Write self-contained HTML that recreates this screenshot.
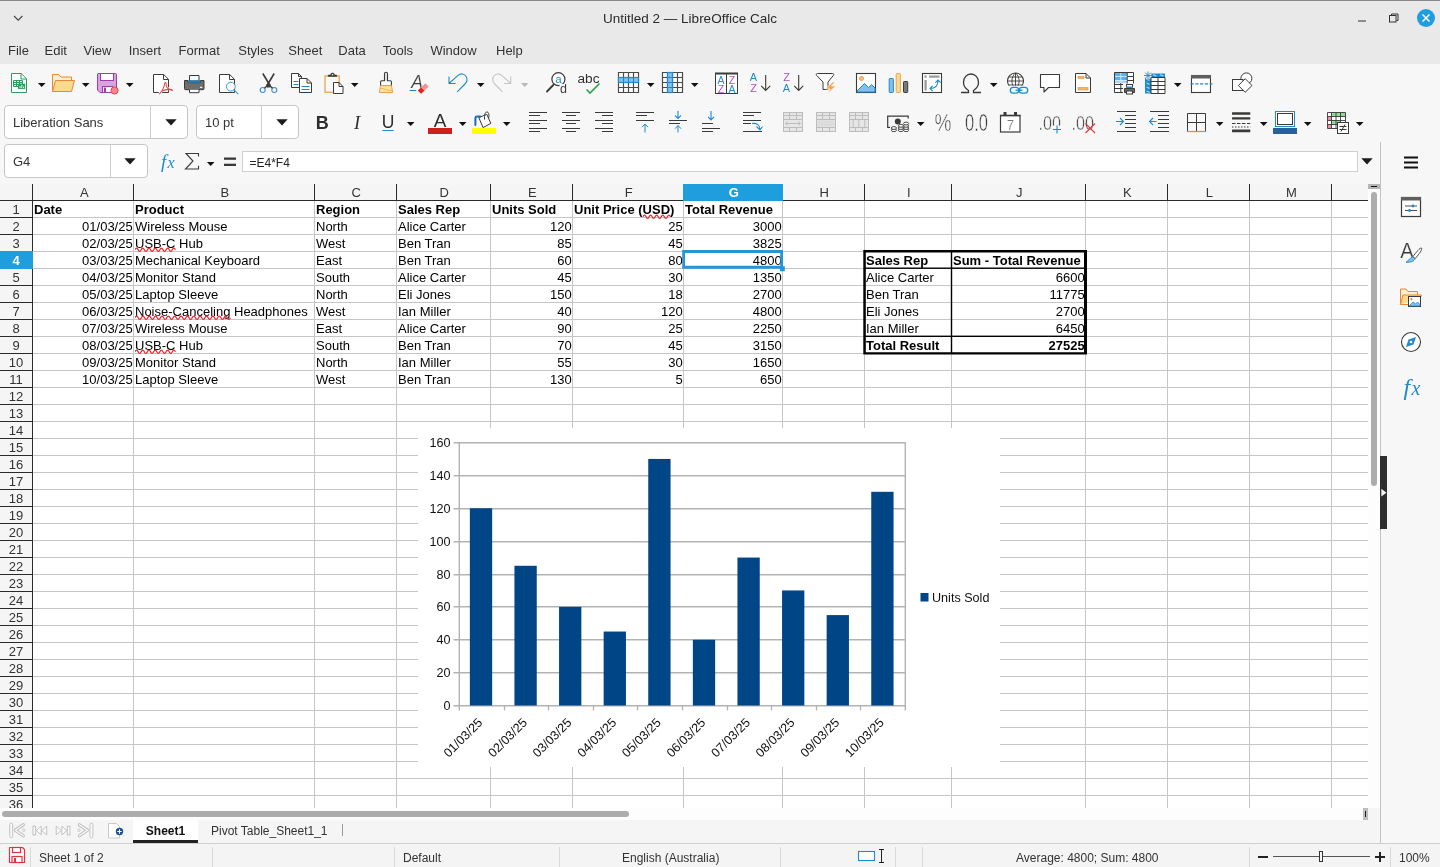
<!DOCTYPE html>
<html lang="en"><head><meta charset="utf-8"><title>Untitled 2 — LibreOffice Calc</title>
<style>
*{box-sizing:border-box;margin:0;padding:0}
html,body{width:1440px;height:867px;overflow:hidden;background:#f7f7f7}
body{position:relative;font-family:"Liberation Sans","DejaVu Sans",sans-serif;font-size:13px;color:#2e2e2e}
#app{position:absolute;left:0;top:0;width:1440px;height:867px;will-change:transform}
.a{position:absolute}
.t{position:absolute;white-space:nowrap;line-height:17px}
.ui{font-size:13px;color:#333}
.c{position:absolute;white-space:nowrap;font-size:13px;line-height:17px;height:17px;color:#000}
.r{text-align:right}
.b{font-weight:bold}
.rh{position:absolute;left:0;width:32px;height:17px;line-height:17px;text-align:center;font-size:13px;color:#333}
.ch{position:absolute;top:184px;height:16px;line-height:18px;text-align:center;font-size:13px;color:#333}
.ic{position:absolute;width:24px;height:24px;overflow:visible}
.box{position:absolute;background:#fff;border:1px solid #c6c6c6;border-radius:4px}
</style></head><body><div id="app">
<div class="a" style="left:0;top:0;width:1440px;height:64px;background:#e9e9e9"></div>
<div class="a" style="left:0;top:0;width:1440px;height:1px;background:#8a8a8a"></div>
<div class="t" style="left:520px;width:340px;text-align:center;top:9px;font-size:13.5px;color:#2b2b2b;line-height:20px">Untitled 2 — LibreOffice Calc</div>
<svg class="ic" style="left:6px;top:7px" width="24" height="24" viewBox="0 0 24 24"><path d="M8 9l4.200 4.200 4.200-4.200" fill="none" stroke="#444" stroke-width="1.100"/></svg>
<svg class="ic" style="left:1350px;top:7px" width="24" height="24" viewBox="0 0 24 24"><rect x="8" y="13.500" width="8" height="1" fill="#333"/></svg>
<svg class="ic" style="left:1382px;top:7px" width="24" height="24" viewBox="0 0 24 24"><path d="M9.500 8.500v-1.500h6.500v6.500h-1.500" fill="none" stroke="#333" stroke-width="1"/><rect x="7.500" y="8.500" width="6.500" height="6.500" fill="none" stroke="#333" stroke-width="1"/></svg>
<svg class="ic" style="left:1414px;top:6px" width="24" height="24" viewBox="0 0 24 24"><circle cx="12" cy="12" r="9" fill="#1e9ee0"/><path d="M8.500 8.500l7 7M15.500 8.500l-7 7" stroke="#fff" stroke-width="1.500"/></svg>
<div class="t ui" style="left:8px;top:42px;line-height:18px">File</div>
<div class="t ui" style="left:44.5px;top:42px;line-height:18px">Edit</div>
<div class="t ui" style="left:83.5px;top:42px;line-height:18px">View</div>
<div class="t ui" style="left:128.7px;top:42px;line-height:18px">Insert</div>
<div class="t ui" style="left:178.6px;top:42px;line-height:18px">Format</div>
<div class="t ui" style="left:238.3px;top:42px;line-height:18px">Styles</div>
<div class="t ui" style="left:288.3px;top:42px;line-height:18px">Sheet</div>
<div class="t ui" style="left:338.3px;top:42px;line-height:18px">Data</div>
<div class="t ui" style="left:382.7px;top:42px;line-height:18px">Tools</div>
<div class="t ui" style="left:430.4px;top:42px;line-height:18px">Window</div>
<div class="t ui" style="left:496px;top:42px;line-height:18px">Help</div>
<div class="a" style="left:0;top:64px;width:1440px;height:120px;background:#f7f7f7"></div>
<svg class="ic" style="left:7px;top:71px" width="24" height="24" viewBox="0 0 24 24"><path d="M4.500 2.500h9.700l5.300 5.300v13.700h-15z" fill="#fff" stroke="#2f9c5e" stroke-linejoin="round"/><path d="M14 2.500v5.500h5.500" fill="none" stroke="#2f9c5e"/><path d="M6.500 9.500h9v6h-9zM6.500 11.500h9M6.500 13.500h9M9.500 9.500v6M12.500 9.500v6" fill="#e9f6ee" stroke="#2f9c5e" stroke-width="1"/><rect x="11" y="12.700" width="7.200" height="5.200" fill="#2f9c5e"/><path d="M13 17v-2M14.800 17v-3M16.600 17v-1.500" stroke="#fff" stroke-width="0.900" fill="none"/></svg>
<svg class="ic" style="left:29px;top:71px" width="24" height="24" viewBox="0 0 24 24"><path d="M8.9 12h7.6l-3.8 4z" fill="#111"/></svg>
<svg class="ic" style="left:51px;top:71px" width="24" height="24" viewBox="0 0 24 24"><path d="M1.5 20.5v-17h6.2l2.3 2.5h10.5v4" fill="#fdf0d0" stroke="#ed8733" stroke-linejoin="round"/><path d="M1.5 20.5l3-11h19l-3 11z" fill="#f8db8f" stroke="#ed8733" stroke-linejoin="round"/></svg>
<svg class="ic" style="left:73px;top:71px" width="24" height="24" viewBox="0 0 24 24"><path d="M8.9 12h7.6l-3.8 4z" fill="#111"/></svg>
<svg class="ic" style="left:95px;top:71px" width="24" height="24" viewBox="0 0 24 24"><path d="M3 2.500h17.500a1 1 0 0 1 1 1v18h-16.500l-2.500-2.500v-15.500a1 1 0 0 1 0.500-1z" fill="#d9a3e2" stroke="#9b3fa0" stroke-linejoin="round"/><rect x="5.500" y="2.500" width="13" height="7" fill="#fff" stroke="#9b3fa0"/><rect x="7.500" y="15.500" width="10" height="6" fill="#fff" stroke="#9b3fa0"/><rect x="9" y="16.500" width="2" height="4.500" fill="#9b3fa0"/><circle cx="19.500" cy="19.500" r="3.600" fill="#f4858d" stroke="#e2484f"/></svg>
<svg class="ic" style="left:117px;top:71px" width="24" height="24" viewBox="0 0 24 24"><path d="M8.9 12h7.6l-3.8 4z" fill="#111"/></svg>
<svg class="ic" style="left:149px;top:71px" width="24" height="24" viewBox="0 0 24 24"><path d="M4.5 3.5h10.2l4.8 4.8v13.2h-15z" fill="#fff" stroke="#3a3a38" stroke-linejoin="round"/><path d="M14.5 3.5v5h5" fill="none" stroke="#3a3a38" stroke-linejoin="round"/><path d="M10.500 22.500c2.500-2.500 4.500-6 5-10 0.200-1.500 1.800-1.200 1.500 0.300-0.500 3 2 5.700 6.500 6.700" fill="none" stroke="#fff" stroke-width="2.600"/><path d="M10.500 22.800c2.700-2.600 4.600-6.200 5.100-10.300 0.200-1.500 1.700-1.300 1.500 0.200-0.400 3.200 2.200 5.900 6.400 6.800M12.500 20.200c3-1.500 6.500-2.100 10.500-1.700" fill="none" stroke="#e8474e" stroke-width="1.100" stroke-linecap="round"/></svg>
<svg class="ic" style="left:182px;top:71px" width="24" height="24" viewBox="0 0 24 24"><path d="M7.500 10v-5.500h9.500v5.500z" fill="#f2fafe" stroke="#3a3a38" stroke-linejoin="round"/><path d="M2.500 9.500h3.500v2.200h12.500v-2.200h3.500v8.200a1 1 0 0 1-1 1h-17.500a1 1 0 0 1-1-1z" fill="#6e6e6c" stroke="#3a3a38" stroke-linejoin="round"/><rect x="6.200" y="9.400" width="12.100" height="2.300" fill="#1e7bb5"/><path d="M7.500 18.700v3h9.500v-3" fill="#fff" stroke="#3a3a38" stroke-linejoin="round"/><rect x="18" y="15.800" width="2.300" height="1.100" fill="#fff"/></svg>
<svg class="ic" style="left:215px;top:71px" width="24" height="24" viewBox="0 0 24 24"><path d="M4.5 3.5h10.2l4.8 4.8v13.2h-15z" fill="#fff" stroke="#3a3a38" stroke-linejoin="round"/><path d="M14.5 3.5v5h5" fill="none" stroke="#3a3a38" stroke-linejoin="round"/><circle cx="15.800" cy="15.600" r="4.400" fill="#fff" stroke="#3b9ad6" stroke-width="1"/><path d="M19 18.800l4 4" stroke="#3b9ad6" stroke-width="1.100" stroke-linecap="round"/></svg>
<svg class="ic" style="left:256px;top:71px" width="24" height="24" viewBox="0 0 24 24"><path d="M6.800 2.500l7.200 12M18.200 2.500l-7.200 12" stroke="#3a3a38" stroke-width="1.600" fill="none"/><path d="M10 14.200l2.500-3 2.500 3-1 2.200h-3z" fill="#3a3a38"/><circle cx="6.700" cy="19" r="2.500" fill="none" stroke="#3f8fcb" stroke-width="1.100"/><circle cx="18.300" cy="19" r="2.500" fill="none" stroke="#3f8fcb" stroke-width="1.100"/><path d="M8.500 17.200l2.300-2.200M16.500 17.200l-2.300-2.200" stroke="#3a3a38" stroke-width="1.400"/></svg>
<svg class="ic" style="left:289px;top:71px" width="24" height="24" viewBox="0 0 24 24"><path d="M2.500 2.500h7l3 3v11h-10z" fill="#fff" stroke="#3a3a38" stroke-linejoin="round"/><path d="M9.500 2.500v3h3" fill="none" stroke="#3a3a38"/><path d="M4.500 10.500h5M4.500 13.500h5" stroke="#1e8bcd" stroke-width="1"/><path d="M10.500 7.500h7.500l4.500 4.500v9.500h-12z" fill="#fff" stroke="#3a3a38" stroke-linejoin="round"/><path d="M18 7.500v4.500h4.500" fill="none" stroke="#3a3a38"/><path d="M12.500 15.500h8M12.500 18.500h8" stroke="#1e8bcd" stroke-width="1"/></svg>
<svg class="ic" style="left:321px;top:71px" width="24" height="24" viewBox="0 0 24 24"><path d="M4 5h14.200v16.200h-14.200z" fill="#fafafa" stroke="#f3ad62" stroke-width="1.500"/><path d="M7.300 5.500v-1.500h2.200a2 2 0 0 1 4 0h2.200v1.500z" fill="#3a3a38" stroke="#3a3a38" stroke-width="0.600" stroke-linejoin="round"/><circle cx="11.500" cy="3.700" r="0.800" fill="#f7f7f7"/><path d="M12.500 11.500h5.500l4 4v7h-9.500z" fill="#fff" stroke="#3a3a38" stroke-linejoin="round"/><path d="M18 11.500v4h4" fill="none" stroke="#3a3a38"/></svg>
<svg class="ic" style="left:342px;top:71px" width="24" height="24" viewBox="0 0 24 24"><path d="M8.9 12h7.6l-3.8 4z" fill="#111"/></svg>
<svg class="ic" style="left:374px;top:71px" width="24" height="24" viewBox="0 0 24 24"><path d="M10.500 9.700v-7a1.500 1.500 0 0 1 3 0v7h2.900a1 1 0 0 1 1 1v3.800h-10.800v-3.800a1 1 0 0 1 1-1z" fill="#fff" stroke="#3a3a38" stroke-width="1.100" stroke-linejoin="round"/><rect x="11.300" y="2.300" width="1.400" height="7.500" fill="#d2d2d2"/><path d="M6.600 14.600h10.800l1.400 6.900h-13.600z" fill="#fbe3a8" stroke="#f0a050" stroke-linejoin="round"/><path d="M6 17.300c4 0.200 8 2 12.500 2.300" stroke="#f0a050" stroke-width="0.700" fill="none"/></svg>
<svg class="ic" style="left:406.5px;top:71px" width="24" height="24" viewBox="0 0 24 24"><text x="4.200" y="16.700" font-family="Liberation Sans, sans-serif" font-size="17.500" font-style="italic" fill="#3a3a38" stroke="#f7f7f7" stroke-width="0.200">A</text><path d="M2.600 19.500h6.600" stroke="#2e7fb8" stroke-width="1.100"/><path d="M10.900 19.600l7.500-7.300 3.200 3.200-7.500 7.300z" fill="#f98d8d"/><path d="M10.900 19.600l3.200-3.100 3.200 3.200-3.200 3.100z" fill="#e0241b"/></svg>
<svg class="ic" style="left:445px;top:71px" width="24" height="24" viewBox="0 0 24 24"><path d="M4 5.500v7h6.600M4 12.500l9-8.200c2.500-2.200 6.500-1.800 8.200 1.200 1.700 3 0.300 6-1.700 8l-7.300 7.300" fill="none" stroke="#1e8bcd" stroke-width="1.100"/></svg>
<svg class="ic" style="left:468px;top:71px" width="24" height="24" viewBox="0 0 24 24"><path d="M8.9 12h7.6l-3.8 4z" fill="#111"/></svg>
<svg class="ic" style="left:490px;top:71px" width="24" height="24" viewBox="0 0 24 24"><path d="M20.700 5.500v7h-6.600M20.700 12.500l-9-8.200c-2.500-2.200-6.500-1.800-8.200 1.200-1.700 3-0.300 6 1.700 8l7.300 7.300" fill="none" stroke="#c4c4c4" stroke-width="1.100"/></svg>
<svg class="ic" style="left:512px;top:71px" width="24" height="24" viewBox="0 0 24 24"><path d="M8.9 12h7.6l-3.8 4z" fill="#b9b9b9"/></svg>
<svg class="ic" style="left:544px;top:71px" width="24" height="24" viewBox="0 0 24 24"><circle cx="14.400" cy="8.200" r="6.500" fill="#fff" stroke="#3a3a38" stroke-width="1.200"/><path d="M9.300 14l-6.300 6.500" stroke="#3a3a38" stroke-width="1.800" stroke-linecap="round"/><text x="11.200" y="12" font-family="Liberation Sans, sans-serif" font-size="11.500" fill="#1e8bcd">a</text><rect x="15.500" y="13" width="8.500" height="10" fill="#f7f7f7"/><text x="16" y="21.800" font-family="Liberation Sans, sans-serif" font-size="12.500" fill="#3a3a38">d</text></svg>
<svg class="ic" style="left:577px;top:71px" width="24" height="24" viewBox="0 0 24 24"><text x="0.500" y="11.800" font-family="Liberation Sans, sans-serif" font-size="12.500" fill="#2f2f2d" textLength="22" lengthAdjust="spacingAndGlyphs">abc</text><path d="M9.500 18.500l3.500 3.500 9.500-9.500" fill="none" stroke="#2aa24a" stroke-width="1.600"/></svg>
<svg class="ic" style="left:616px;top:71px" width="24" height="24" viewBox="0 0 24 24"><rect x="2.500" y="1.500" width="20" height="20" rx="0.800" fill="#fff"/><path d="M2.500 1.500h20v20h-20zM2.500 6.500h20M2.500 11.500h20M2.500 16.500h20M7.500 1.500v20M12.500 1.500v20M17.500 1.500v20" fill="none" stroke="#4a4a48" stroke-width="1.200"/><rect x="2.500" y="6.500" width="20" height="5" fill="#83beec" stroke="#1e8bcd" stroke-width="1.200"/><path d="M7.500 6.500v5M12.500 6.500v5M17.500 6.500v5" stroke="#1e8bcd" stroke-width="1.200"/></svg>
<svg class="ic" style="left:638px;top:71px" width="24" height="24" viewBox="0 0 24 24"><path d="M8.9 12h7.6l-3.8 4z" fill="#111"/></svg>
<svg class="ic" style="left:660px;top:71px" width="24" height="24" viewBox="0 0 24 24"><rect x="2.500" y="1.500" width="20" height="20" rx="0.800" fill="#fff"/><path d="M2.500 1.500h20v20h-20zM2.500 6.500h20M2.500 11.500h20M2.500 16.500h20M7.500 1.500v20M12.500 1.500v20M17.500 1.500v20" fill="none" stroke="#4a4a48" stroke-width="1.200"/><rect x="7.500" y="1.500" width="5" height="20" fill="#83beec" stroke="#1e8bcd" stroke-width="1.200"/><path d="M7.500 6.500h5M7.500 11.500h5M7.500 16.500h5" stroke="#1e8bcd" stroke-width="1.200"/></svg>
<svg class="ic" style="left:682px;top:71px" width="24" height="24" viewBox="0 0 24 24"><path d="M8.9 12h7.6l-3.8 4z" fill="#111"/></svg>
<svg class="ic" style="left:713.5px;top:71px" width="24" height="24" viewBox="0 0 24 24"><rect x="1.500" y="2.500" width="22" height="20" fill="#fff" stroke="#3a3a38"/><rect x="1" y="1.500" width="23" height="2" fill="#3a3a38"/><path d="M12.500 3v19.500" stroke="#3a3a38"/><text x="7" y="12.8" font-family="Liberation Sans, sans-serif" font-size="10.5" fill="#1e8bcd" text-anchor="middle">A</text><text x="7" y="21.5" font-family="Liberation Sans, sans-serif" font-size="10.5" fill="#b84fc0" text-anchor="middle">Z</text><text x="18" y="12.8" font-family="Liberation Sans, sans-serif" font-size="10.5" fill="#b84fc0" text-anchor="middle">Z</text><text x="18" y="21.5" font-family="Liberation Sans, sans-serif" font-size="10.5" fill="#1e8bcd" text-anchor="middle">A</text></svg>
<svg class="ic" style="left:746.8px;top:71px" width="24" height="24" viewBox="0 0 24 24"><text x="6.5" y="10.3" font-family="Liberation Sans, sans-serif" font-size="11" fill="#1e8bcd" text-anchor="middle">A</text><text x="6.5" y="21.3" font-family="Liberation Sans, sans-serif" font-size="11" fill="#b84fc0" text-anchor="middle">Z</text><path d="M18.700 4v15.300M14.200 14.800l4.500 4.700 4.500-4.700" fill="none" stroke="#3a3a38" stroke-width="1.100"/></svg>
<svg class="ic" style="left:779.5px;top:71px" width="24" height="24" viewBox="0 0 24 24"><text x="6.5" y="10.3" font-family="Liberation Sans, sans-serif" font-size="11" fill="#b84fc0" text-anchor="middle">Z</text><text x="6.5" y="21.3" font-family="Liberation Sans, sans-serif" font-size="11" fill="#1e8bcd" text-anchor="middle">A</text><path d="M18.700 4v15.300M14.200 14.800l4.500 4.700 4.500-4.700" fill="none" stroke="#3a3a38" stroke-width="1.100"/></svg>
<svg class="ic" style="left:813px;top:71px" width="24" height="24" viewBox="0 0 24 24"><path d="M4.500 2.500h15c1.300 0 1.600 1 0.800 2l-5.300 6.500v7.500h-5v-7.500l-6.300-6.500c-0.800-1-0.500-2 0.800-2z" fill="#fff" stroke="#3a3a38" stroke-linejoin="round"/><path d="M19.500 11l-7 7h4.500l-3.500 5.500 9.500-8.500h-4.500l3.500-4z" fill="#f5a34b" stroke="#f7f7f7" stroke-width="0.800"/></svg>
<svg class="ic" style="left:854px;top:71px" width="24" height="24" viewBox="0 0 24 24"><rect x="2.500" y="2.500" width="19" height="19" fill="#fff" stroke="#3a3a38" stroke-width="1.100"/><circle cx="7.500" cy="7.500" r="2" fill="#f8c272" stroke="#ed8733" stroke-width="0.800"/><path d="M3 21v-1l7.500-7.500 4 4 3-3 3.500 3.500v4z" fill="#83beec" stroke="#1e8bcd" stroke-width="1" stroke-linejoin="round"/></svg>
<svg class="ic" style="left:886px;top:71px" width="24" height="24" viewBox="0 0 24 24"><rect x="3.200" y="7.500" width="4.200" height="14" rx="0.800" fill="#83beec" stroke="#1e8bcd"/><rect x="10.200" y="2.500" width="4.200" height="19" rx="0.800" fill="#f8db8f" stroke="#f0a550"/><rect x="17.500" y="10.500" width="4.200" height="11" rx="0.800" fill="#7a7a78" stroke="#3a3a38"/></svg>
<svg class="ic" style="left:920px;top:71px" width="24" height="24" viewBox="0 0 24 24"><rect x="2.500" y="2.500" width="19" height="19" fill="#fff" stroke="#3a3a38" stroke-width="1.100"/><rect x="4.500" y="4.500" width="2.200" height="2.200" fill="#9a9a9a"/><rect x="9" y="4.500" width="10.500" height="2.200" fill="#9a9a9a"/><rect x="4.500" y="9" width="2.200" height="10.500" fill="#9a9a9a"/><path d="M10 17.500c5 0 8-3 8-8M15.300 11.700l2.700-2.700 2.700 2.700M12.700 14.800l-2.700 2.700 2.700 2.700" fill="none" stroke="#1e8bcd" stroke-width="1.100"/></svg>
<svg class="ic" style="left:959px;top:71px" width="24" height="24" viewBox="0 0 24 24"><path d="M2 21.500h7.500v-2c-3-1.800-5-4.800-5-8.200 0-4.800 3.300-8.300 7.500-8.300s7.500 3.500 7.500 8.300c0 3.400-2 6.400-5 8.200v2h7.500" fill="none" stroke="#3a3a38" stroke-width="1.300"/></svg>
<svg class="ic" style="left:981px;top:71px" width="24" height="24" viewBox="0 0 24 24"><path d="M8.9 12h7.6l-3.8 4z" fill="#111"/></svg>
<svg class="ic" style="left:1005px;top:71px" width="24" height="24" viewBox="0 0 24 24"><circle cx="10.500" cy="10" r="8" fill="#fff" stroke="#3a3a38" stroke-width="1.100"/><path d="M2.500 10h16M10.500 2v16M3.700 6h13.600M3.700 14h13.600M10.500 2c-4.800 3.700-4.800 12.300 0 16M10.500 2c4.800 3.700 4.800 12.300 0 16" fill="none" stroke="#3a3a38" stroke-width="0.900"/><rect x="3.500" y="14.800" width="20.500" height="9" fill="#f7f7f7"/><rect x="5.300" y="16.300" width="8.500" height="5.800" rx="2.900" fill="none" stroke="#1e8bcd" stroke-width="1.300"/><rect x="14.200" y="16.300" width="8.500" height="5.800" rx="2.900" fill="none" stroke="#1e8bcd" stroke-width="1.300"/><path d="M10.500 19.200h7" stroke="#1e8bcd" stroke-width="1.300"/></svg>
<svg class="ic" style="left:1038px;top:71px" width="24" height="24" viewBox="0 0 24 24"><path d="M2.500 3.500h19v13h-11l-4.500 4.500v-4.500h-3.500z" fill="#fff" stroke="#3a3a38" stroke-width="1.100" stroke-linejoin="round"/></svg>
<svg class="ic" style="left:1071px;top:71px" width="24" height="24" viewBox="0 0 24 24"><path d="M4.500 2.500h10.500l4.500 4.500v14.500h-15z" fill="#fff" stroke="#3a3a38" stroke-linejoin="round"/><path d="M15 2.500v4.500h4.500" fill="none" stroke="#3a3a38"/><rect x="7" y="5.500" width="6" height="2" fill="#f6b868" stroke="#ed8733" stroke-width="0.600"/><rect x="7" y="16.500" width="10" height="2.500" fill="#f6b868" stroke="#ed8733" stroke-width="0.600"/></svg>
<svg class="ic" style="left:1111px;top:71px" width="24" height="24" viewBox="0 0 24 24"><rect x="3.500" y="1.500" width="19" height="20" fill="#fff"/><rect x="3.500" y="1.500" width="12.700" height="8" fill="#5fb0ea"/><rect x="3.500" y="9.500" width="12.700" height="2.500" fill="#a9d4f5"/><path d="M3.500 1.500h19v20h-19zM3.500 13.500h19M3.500 17.500h19M16.200 1.500v20M9.800 12v9.500M16.200 5.500h6.300M16.200 9.500h6.300" fill="none" stroke="#3a3a38" stroke-width="1"/><path d="M4 5.500h12M4 9.500h12M9.800 2v10" stroke="#d5eafa" stroke-width="0.900"/><rect x="12" y="12.500" width="12" height="11.500" fill="#f7f7f7"/><rect x="15.500" y="13.500" width="6" height="3.500" fill="#fff" stroke="#3a3a38"/><rect x="15" y="15.500" width="7" height="1.500" fill="#1e8bcd"/><path d="M13.500 17.500h10v4h-10z" fill="#6b6b69" stroke="#3a3a38"/><rect x="15.500" y="20" width="6" height="3" fill="#fff" stroke="#3a3a38"/></svg>
<svg class="ic" style="left:1143px;top:71px" width="24" height="24" viewBox="0 0 24 24"><rect x="2" y="2.500" width="20" height="20" fill="#fff"/><rect x="2" y="2.500" width="20" height="4" fill="#1e8bcd"/><rect x="2" y="2.500" width="6" height="20" fill="#1e8bcd"/><path d="M8 6.500h14v16h-14zM8 10.500h14M8 14.500h14M8 18.500h14M15 6.500v16" fill="none" stroke="#3a3a38" stroke-width="1"/><path d="M3.500 8l3 1.300M3.500 12l3 1.300M3.500 16l3 1.300M3.500 20l3 1.300M10 3.700l3.500 1.500M17 3.700l3.500 1.500" stroke="#9fd0f3" stroke-width="1.300"/><circle cx="5" cy="4.500" r="3.600" fill="#f7f7f7"/><path d="M5 0.500v8M1 4.500h8M2.200 1.700l5.600 5.600M7.800 1.700l-5.600 5.600" stroke="#1e8bcd" stroke-width="0.900"/></svg>
<svg class="ic" style="left:1165px;top:71px" width="24" height="24" viewBox="0 0 24 24"><path d="M8.9 12h7.6l-3.8 4z" fill="#111"/></svg>
<svg class="ic" style="left:1189px;top:71px" width="24" height="24" viewBox="0 0 24 24"><rect x="2.500" y="4.500" width="19" height="17" fill="#fff" stroke="#3a3a38" stroke-width="1.100"/><rect x="2" y="4" width="20" height="3.500" fill="#5e5e5c"/><path d="M1.500 12.800h22" stroke="#1e8bcd" stroke-width="1.200" stroke-dasharray="3.200 1.600"/></svg>
<svg class="ic" style="left:1230px;top:71px" width="24" height="24" viewBox="0 0 24 24"><circle cx="16.400" cy="7.400" r="5.500" fill="#fff" stroke="#3a3a38"/><rect x="2.500" y="8.500" width="10.500" height="11" fill="#fff" stroke="#3a3a38"/><path d="M15.200 7.700l6.800 6.800-6.800 6.800-6.800-6.800z" fill="#fff" stroke="#3a3a38" stroke-linejoin="round"/></svg>
<div class="box" style="left:4px;top:105px;width:184px;height:34px"></div>
<div class="a" style="left:150px;top:106px;width:1px;height:32px;background:#d0d0d0"></div>
<div class="t ui" style="left:13px;top:114px;line-height:18px">Liberation Sans</div>
<svg class="ic" style="left:159px;top:110px" width="24" height="24" viewBox="0 0 24 24"><path d="M6.3 9.2h11.4l-5.7 6.2z" fill="#1c1c1c"/></svg>
<div class="box" style="left:196px;top:105px;width:103px;height:34px"></div>
<div class="a" style="left:261px;top:106px;width:1px;height:32px;background:#d0d0d0"></div>
<div class="t ui" style="left:205px;top:114px;line-height:18px">10 pt</div>
<svg class="ic" style="left:270px;top:110px" width="24" height="24" viewBox="0 0 24 24"><path d="M6.3 9.2h11.4l-5.7 6.2z" fill="#1c1c1c"/></svg>
<svg class="ic" style="left:310px;top:110px" width="24" height="24" viewBox="0 0 24 24"><text x="12.300" y="19" font-family="Liberation Sans, sans-serif" font-size="18" font-weight="bold" fill="#2e2e2c" text-anchor="middle">B</text></svg>
<svg class="ic" style="left:344px;top:110px" width="24" height="24" viewBox="0 0 24 24"><text x="13" y="19" font-family="Liberation Serif, serif" font-size="18.500" font-style="italic" fill="#2e2e2c" text-anchor="middle">I</text></svg>
<svg class="ic" style="left:376px;top:110px" width="24" height="24" viewBox="0 0 24 24"><text x="12" y="17.800" font-family="Liberation Sans, sans-serif" font-size="17.500" fill="#2e2e2c" text-anchor="middle">U</text><path d="M6.300 20.500h11.400" stroke="#1e8bcd" stroke-width="1"/></svg>
<svg class="ic" style="left:398px;top:110px" width="24" height="24" viewBox="0 0 24 24"><path d="M8.9 12h7.6l-3.8 4z" fill="#111"/></svg>
<svg class="ic" style="left:427px;top:110px" width="24" height="24" viewBox="0 0 24 24"><text x="13" y="16.500" font-family="Liberation Sans, sans-serif" font-size="19" fill="#2e2e2c" text-anchor="middle">A</text><rect x="1" y="18" width="24" height="6" fill="#c9211e"/></svg>
<svg class="ic" style="left:450px;top:110px" width="24" height="24" viewBox="0 0 24 24"><path d="M8.9 12h7.6l-3.8 4z" fill="#111"/></svg>
<svg class="ic" style="left:472px;top:110px" width="24" height="24" viewBox="0 0 24 24"><path d="M6.800 7.600l8-3.200 4 8.900-7.700 4.300z" fill="#fff" stroke="#3a3a38" stroke-width="1" stroke-linejoin="round"/><path d="M12.600 9.600c-0.400-4.500 0.400-7.400 2.200-7.600 2-0.200 2.600 3 1.800 6" fill="none" stroke="#3a3a38" stroke-width="1"/><path d="M3.400 15v-6.500c0-1.300 0.500-1.900 1.800-1.900h3" fill="none" stroke="#1c6db5" stroke-width="2" stroke-linecap="round"/><rect x="0" y="18" width="24" height="6" fill="#ffff00"/></svg>
<svg class="ic" style="left:494px;top:110px" width="24" height="24" viewBox="0 0 24 24"><path d="M8.9 12h7.6l-3.8 4z" fill="#111"/></svg>
<svg class="ic" style="left:525px;top:110px" width="24" height="24" viewBox="0 0 24 24"><path d="M4 2.5H22M4 5.5H15M4 10.5H22M4 13.5H15M4 18.5H22M4 21.5H15" stroke="#3a3a38" stroke-width="1" fill="none"/></svg>
<svg class="ic" style="left:558px;top:110px" width="24" height="24" viewBox="0 0 24 24"><path d="M4 2.5H22M8 5.5H18M4 10.5H22M8 13.5H18M4 18.5H22M8 21.5H18" stroke="#3a3a38" stroke-width="1" fill="none"/></svg>
<svg class="ic" style="left:592px;top:110px" width="24" height="24" viewBox="0 0 24 24"><path d="M3 2.5H21M10 5.5H21M3 10.5H21M10 13.5H21M3 18.5H21M10 21.5H21" stroke="#3a3a38" stroke-width="1" fill="none"/></svg>
<svg class="ic" style="left:633px;top:110px" width="24" height="24" viewBox="0 0 24 24"><path d="M3 2.5H21M3 5.5H14M3 10.5H21" stroke="#3a3a38" stroke-width="1" fill="none"/><path d="M12 22.5V14M9 17.2l3-3.200 3 3.200" fill="none" stroke="#1e8bcd" stroke-width="1"/></svg>
<svg class="ic" style="left:666px;top:110px" width="24" height="24" viewBox="0 0 24 24"><path d="M3 10.5H21M3 13.5H14" stroke="#3a3a38" stroke-width="1" fill="none"/><path d="M12 1V8.5M9 5.3l3 3.200 3-3.200" fill="none" stroke="#1e8bcd" stroke-width="1.100"/><path d="M12 22.5V15.5M9 18.7l3-3.200 3 3.200" fill="none" stroke="#1e8bcd" stroke-width="1"/></svg>
<svg class="ic" style="left:699px;top:110px" width="24" height="24" viewBox="0 0 24 24"><path d="M3 13.5H14M3 18.5H21M3 21.5H14" stroke="#3a3a38" stroke-width="1" fill="none"/><path d="M12 1V10M9 6.8l3 3.200 3-3.200" fill="none" stroke="#1e8bcd" stroke-width="1.100"/></svg>
<svg class="ic" style="left:740px;top:110px" width="24" height="24" viewBox="0 0 24 24"><path d="M3 2.5H21M3 5.5H14M3 10.5H21M3 13.5H11M3 21.5H22" stroke="#3a3a38" stroke-width="1" fill="none"/><path d="M12 13.500c5-0.500 8 1.500 8 6M16.500 16.500l3.500 3.500 2.500-3.500" fill="none" stroke="#1e8bcd" stroke-width="1.100"/></svg>
<svg class="ic" style="left:781px;top:110px" width="24" height="24" viewBox="0 0 24 24"><rect x="2.500" y="2.500" width="19" height="19" fill="#e6e6e6" stroke="#bdbdbd"/><path d="M2.500 5.500h19M2.500 9.500h19M2.500 17.500h19M8.500 2.500v7M15.500 2.500v7M8.500 17.500v4M15.500 17.500v4" stroke="#bdbdbd" fill="none"/><path d="M4.500 13.500h15M6.500 11.700l-2 1.800 2 1.800M17.500 11.700l2 1.800-2 1.800" fill="none" stroke="#bdbdbd" stroke-width="1"/></svg>
<svg class="ic" style="left:814px;top:110px" width="24" height="24" viewBox="0 0 24 24"><rect x="2.500" y="2.500" width="19" height="19" fill="#e6e6e6" stroke="#bdbdbd"/><path d="M2.500 5.500h19M2.500 9.500h19M2.500 17.500h19M8.500 2.500v7M15.500 2.500v7M8.500 17.500v4M15.500 17.500v4" stroke="#bdbdbd" fill="none"/><rect x="3.500" y="10.500" width="17" height="6" fill="#dcdcdc"/></svg>
<svg class="ic" style="left:847px;top:110px" width="24" height="24" viewBox="0 0 24 24"><rect x="2.500" y="2.500" width="19" height="19" fill="#e6e6e6" stroke="#bdbdbd"/><path d="M2.500 5.500h19M2.500 9.500h19M2.500 17.500h19M8.500 2.500v7M15.500 2.500v7M8.500 17.500v4M15.500 17.500v4" stroke="#bdbdbd" fill="none"/><path d="M6.200 9.500v8M11.800 9.500v8M17.800 9.500v8" stroke="#bdbdbd" fill="none"/></svg>
<svg class="ic" style="left:885px;top:110px" width="24" height="24" viewBox="0 0 24 24"><path d="M5 17.300h-2.300v-11.200h20.500v2.300" fill="none" stroke="#3a3a38" stroke-width="1.200"/><circle cx="12.800" cy="11.500" r="3" fill="#3a3a38"/><ellipse cx="8.9" cy="20.2" rx="2.600" ry="1.400" fill="#fff" stroke="#3a3a38" stroke-width="0.900"/><ellipse cx="8.9" cy="18.0" rx="2.600" ry="1.400" fill="#fff" stroke="#3a3a38" stroke-width="0.900"/><ellipse cx="15.9" cy="20.2" rx="2.600" ry="1.400" fill="#fff" stroke="#3a3a38" stroke-width="0.900"/><ellipse cx="15.9" cy="18.0" rx="2.600" ry="1.400" fill="#fff" stroke="#3a3a38" stroke-width="0.900"/><ellipse cx="15.9" cy="15.8" rx="2.600" ry="1.400" fill="#fff" stroke="#3a3a38" stroke-width="0.900"/><ellipse cx="21.1" cy="20.2" rx="2.600" ry="1.400" fill="#fff" stroke="#3a3a38" stroke-width="0.900"/><ellipse cx="21.1" cy="18.0" rx="2.600" ry="1.400" fill="#fff" stroke="#3a3a38" stroke-width="0.900"/><ellipse cx="21.1" cy="15.8" rx="2.600" ry="1.400" fill="#fff" stroke="#3a3a38" stroke-width="0.900"/><ellipse cx="21.1" cy="13.6" rx="2.600" ry="1.400" fill="#fff" stroke="#3a3a38" stroke-width="0.900"/></svg>
<svg class="ic" style="left:908px;top:110px" width="24" height="24" viewBox="0 0 24 24"><path d="M8.9 12h7.6l-3.8 4z" fill="#111"/></svg>
<svg class="ic" style="left:931px;top:110px" width="24" height="24" viewBox="0 0 24 24"><text x="12" y="21" font-family="Liberation Sans, sans-serif" font-size="24" fill="#3a3a38" stroke="#f7f7f7" stroke-width="0.550" text-anchor="middle" textLength="17" lengthAdjust="spacingAndGlyphs">%</text></svg>
<svg class="ic" style="left:964px;top:110px" width="24" height="24" viewBox="0 0 24 24"><text x="12.500" y="21" font-family="Liberation Sans, sans-serif" font-size="23" fill="#3a3a38" stroke="#f7f7f7" stroke-width="0.550" text-anchor="middle" textLength="23" lengthAdjust="spacingAndGlyphs">0.0</text></svg>
<svg class="ic" style="left:998px;top:110px" width="24" height="24" viewBox="0 0 24 24"><rect x="2.500" y="5.500" width="19.500" height="16.500" fill="#fff" stroke="#3a3a38" stroke-width="1.200"/><rect x="2" y="4.800" width="20.500" height="1.500" fill="#3a3a38"/><rect x="5.500" y="2" width="3" height="3.500" fill="#3a3a38"/><rect x="16" y="2" width="3" height="3.500" fill="#3a3a38"/><text x="12.300" y="19.500" font-family="Liberation Sans, sans-serif" font-size="14" fill="#3a3a38" stroke="#fff" stroke-width="0.450" text-anchor="middle">7</text></svg>
<svg class="ic" style="left:1038px;top:110px" width="24" height="24" viewBox="0 0 24 24"><text x="0.500" y="20.300" font-family="Liberation Sans, sans-serif" font-size="20" fill="#3a3a38" stroke="#f7f7f7" stroke-width="0.550" textLength="22.500" lengthAdjust="spacingAndGlyphs">.00</text><rect x="14" y="15.500" width="10" height="9" fill="#f7f7f7"/><path d="M19 15.500v8M15 19.500h8" stroke="#1e8bcd" stroke-width="1.100"/></svg>
<svg class="ic" style="left:1071px;top:110px" width="24" height="24" viewBox="0 0 24 24"><text x="0.500" y="20.300" font-family="Liberation Sans, sans-serif" font-size="20" fill="#3a3a38" stroke="#f7f7f7" stroke-width="0.550" textLength="22.500" lengthAdjust="spacingAndGlyphs">.00</text><path d="M14.500 13.500l9.500 9.500M24 13.500l-9.500 9.500" stroke="#e9383f" stroke-width="1.100"/></svg>
<svg class="ic" style="left:1114px;top:110px" width="24" height="24" viewBox="0 0 24 24"><path d="M3 1.5H22M11 5.5H22M11 9.5H22M11 13.5H22M11 17.5H22M3 21.5H22" stroke="#3a3a38" stroke-width="1" fill="none"/><path d="M2 11.500h7M6 8l3.500 3.500-3.500 3.500" fill="none" stroke="#1e8bcd" stroke-width="1.100"/></svg>
<svg class="ic" style="left:1147px;top:110px" width="24" height="24" viewBox="0 0 24 24"><path d="M3 1.5H22M11 5.5H22M11 9.5H22M11 13.5H22M11 17.5H22M3 21.5H22" stroke="#3a3a38" stroke-width="1" fill="none"/><path d="M9.500 11.500h-7M6 8l-3.500 3.500 3.500 3.500" fill="none" stroke="#1e8bcd" stroke-width="1.100"/></svg>
<svg class="ic" style="left:1184px;top:110px" width="24" height="24" viewBox="0 0 24 24"><path d="M3.500 21.500v-18h18v18M12.500 3.500v18M3.500 12.500h18" fill="none" stroke="#3a3a38" stroke-width="1"/><path d="M3 21.500h19" stroke="#ed8733" stroke-width="1.200"/></svg>
<svg class="ic" style="left:1207px;top:110px" width="24" height="24" viewBox="0 0 24 24"><path d="M8.9 12h7.6l-3.8 4z" fill="#111"/></svg>
<svg class="ic" style="left:1229px;top:110px" width="24" height="24" viewBox="0 0 24 24"><rect x="3" y="2.200" width="18.300" height="2.600" rx="0.500" fill="#3a3a38"/><rect x="3" y="7.300" width="18.300" height="2.200" rx="0.500" fill="#3a3a38"/><path d="M3 13.500h18.300" stroke="#3a3a38" stroke-width="1" stroke-dasharray="3.500 1.500"/><path d="M3 17h18.300" stroke="#3a3a38" stroke-width="1" stroke-dasharray="1.500 1.500"/><rect x="3" y="19.400" width="18.300" height="2.800" rx="0.500" fill="#3a3a38"/></svg>
<svg class="ic" style="left:1251px;top:110px" width="24" height="24" viewBox="0 0 24 24"><path d="M8.9 12h7.6l-3.8 4z" fill="#111"/></svg>
<svg class="ic" style="left:1273px;top:110px" width="24" height="24" viewBox="0 0 24 24"><rect x="2.500" y="1.500" width="19" height="15" fill="#fff" stroke="#1e8bcd" stroke-width="1"/><rect x="4.500" y="3.500" width="15" height="11" fill="none" stroke="#3a3a38" stroke-width="1"/><rect x="0" y="18" width="24" height="6" fill="#2a6099"/></svg>
<svg class="ic" style="left:1295px;top:110px" width="24" height="24" viewBox="0 0 24 24"><path d="M8.9 12h7.6l-3.8 4z" fill="#111"/></svg>
<svg class="ic" style="left:1325px;top:110px" width="24" height="24" viewBox="0 0 24 24"><rect x="2.500" y="2.500" width="18" height="16" fill="#fff"/><rect x="6.500" y="2.500" width="14" height="4" fill="#8fdb9c"/><rect x="2.500" y="6.500" width="4" height="4" fill="#f08f96"/><rect x="6.500" y="10.500" width="9" height="4" fill="#8fdb9c"/><rect x="2.500" y="14.500" width="4" height="4" fill="#f08f96"/><path d="M2.500 2.500h18v16h-18zM2.500 6.500h18M2.500 10.500h18M2.500 14.500h18M6.500 2.500v16M11 2.500v16M15.500 2.500v16" fill="none" stroke="#3a3a38" stroke-width="0.900"/><rect x="12.500" y="12.500" width="11" height="11" fill="#fff" stroke="#3a3a38"/><path d="M14.500 16.500h7M14.500 19.500h7M20 14.500l-4 7" stroke="#3a3a38" stroke-width="1" fill="none"/></svg>
<svg class="ic" style="left:1347px;top:110px" width="24" height="24" viewBox="0 0 24 24"><path d="M8.9 12h7.6l-3.8 4z" fill="#111"/></svg>
<div class="box" style="left:4px;top:144px;width:144px;height:34px"></div>
<div class="a" style="left:110px;top:145px;width:1px;height:32px;background:#d0d0d0"></div>
<div class="t ui" style="left:13px;top:153px;line-height:18px">G4</div>
<svg class="ic" style="left:118px;top:149px" width="24" height="24" viewBox="0 0 24 24"><path d="M6.3 9.2h11.4l-5.7 6.2z" fill="#1c1c1c"/></svg>
<svg class="ic" style="left:157px;top:149px" width="24" height="24" viewBox="0 0 24 24"><text x="4" y="18.500" font-family="Liberation Serif, serif" font-size="19" font-style="italic" fill="#1e8bcd">f</text><text x="10.500" y="18.500" font-family="Liberation Serif, serif" font-size="16" font-style="italic" fill="#1e8bcd">x</text></svg>
<svg class="ic" style="left:180px;top:149px" width="24" height="24" viewBox="0 0 24 24"><path d="M18.500 7.500v-3h-12.500l7 7.500-7.500 8h13v-3.200" fill="none" stroke="#3a3a38" stroke-width="1.100" stroke-linejoin="miter"/></svg>
<svg class="ic" style="left:198px;top:150px" width="24" height="24" viewBox="0 0 24 24"><path d="M8.9 12h7.6l-3.8 4z" fill="#111"/></svg>
<svg class="ic" style="left:217.5px;top:150.5px" width="24" height="24" viewBox="0 0 24 24"><rect x="6" y="6.500" width="12" height="2.300" fill="#3a3a38"/><rect x="6" y="12.700" width="12" height="2.300" fill="#3a3a38"/></svg>
<div class="a" style="left:242px;top:151px;width:1116px;height:21px;background:#fff;border:1px solid #cfcfcf"></div>
<div class="t" style="left:249.5px;top:155px;font-size:12px;color:#222;line-height:17px">=E4*F4</div>
<svg class="ic" style="left:1355px;top:149px" width="24" height="24" viewBox="0 0 24 24"><path d="M6.3 9.2h11.4l-5.7 6.2z" fill="#1c1c1c"/></svg>
<div class="a" style="left:1380px;top:142px;width:1px;height:701px;background:#c2c2c2"></div>
<svg class="ic" style="left:1399px;top:151px" width="24" height="24" viewBox="0 0 24 24"><rect x="5" y="5.500" width="14" height="2" fill="#111"/><rect x="5" y="10.500" width="14" height="2" fill="#111"/><rect x="5" y="15.500" width="14" height="2" fill="#111"/></svg>
<div class="a" style="left:0;top:184px;width:1368px;height:624px;background:#fff;overflow:hidden">
<svg class="a" style="left:0;top:0" width="1368" height="624" viewBox="0 184 1368 624" shape-rendering="crispEdges"><rect x="0" y="184" width="1368" height="16" fill="#f5f5f5"/><rect x="0" y="200" width="32" height="608" fill="#f5f5f5"/><rect x="33" y="217" width="1335" height="1" fill="#c6c6c6"/><rect x="0" y="217" width="32" height="1" fill="#2a2a2a"/><rect x="33" y="234" width="1335" height="1" fill="#c6c6c6"/><rect x="0" y="234" width="32" height="1" fill="#2a2a2a"/><rect x="33" y="251" width="1335" height="1" fill="#c6c6c6"/><rect x="0" y="251" width="32" height="1" fill="#2a2a2a"/><rect x="33" y="268" width="1335" height="1" fill="#c6c6c6"/><rect x="0" y="268" width="32" height="1" fill="#2a2a2a"/><rect x="33" y="285" width="1335" height="1" fill="#c6c6c6"/><rect x="0" y="285" width="32" height="1" fill="#2a2a2a"/><rect x="33" y="302" width="1335" height="1" fill="#c6c6c6"/><rect x="0" y="302" width="32" height="1" fill="#2a2a2a"/><rect x="33" y="319" width="1335" height="1" fill="#c6c6c6"/><rect x="0" y="319" width="32" height="1" fill="#2a2a2a"/><rect x="33" y="336" width="1335" height="1" fill="#c6c6c6"/><rect x="0" y="336" width="32" height="1" fill="#2a2a2a"/><rect x="33" y="353" width="1335" height="1" fill="#c6c6c6"/><rect x="0" y="353" width="32" height="1" fill="#2a2a2a"/><rect x="33" y="370" width="1335" height="1" fill="#c6c6c6"/><rect x="0" y="370" width="32" height="1" fill="#2a2a2a"/><rect x="33" y="387" width="1335" height="1" fill="#c6c6c6"/><rect x="0" y="387" width="32" height="1" fill="#2a2a2a"/><rect x="33" y="404" width="1335" height="1" fill="#c6c6c6"/><rect x="0" y="404" width="32" height="1" fill="#2a2a2a"/><rect x="33" y="421" width="1335" height="1" fill="#c6c6c6"/><rect x="0" y="421" width="32" height="1" fill="#2a2a2a"/><rect x="33" y="438" width="1335" height="1" fill="#c6c6c6"/><rect x="0" y="438" width="32" height="1" fill="#2a2a2a"/><rect x="33" y="455" width="1335" height="1" fill="#c6c6c6"/><rect x="0" y="455" width="32" height="1" fill="#2a2a2a"/><rect x="33" y="472" width="1335" height="1" fill="#c6c6c6"/><rect x="0" y="472" width="32" height="1" fill="#2a2a2a"/><rect x="33" y="489" width="1335" height="1" fill="#c6c6c6"/><rect x="0" y="489" width="32" height="1" fill="#2a2a2a"/><rect x="33" y="506" width="1335" height="1" fill="#c6c6c6"/><rect x="0" y="506" width="32" height="1" fill="#2a2a2a"/><rect x="33" y="523" width="1335" height="1" fill="#c6c6c6"/><rect x="0" y="523" width="32" height="1" fill="#2a2a2a"/><rect x="33" y="540" width="1335" height="1" fill="#c6c6c6"/><rect x="0" y="540" width="32" height="1" fill="#2a2a2a"/><rect x="33" y="557" width="1335" height="1" fill="#c6c6c6"/><rect x="0" y="557" width="32" height="1" fill="#2a2a2a"/><rect x="33" y="574" width="1335" height="1" fill="#c6c6c6"/><rect x="0" y="574" width="32" height="1" fill="#2a2a2a"/><rect x="33" y="591" width="1335" height="1" fill="#c6c6c6"/><rect x="0" y="591" width="32" height="1" fill="#2a2a2a"/><rect x="33" y="608" width="1335" height="1" fill="#c6c6c6"/><rect x="0" y="608" width="32" height="1" fill="#2a2a2a"/><rect x="33" y="625" width="1335" height="1" fill="#c6c6c6"/><rect x="0" y="625" width="32" height="1" fill="#2a2a2a"/><rect x="33" y="642" width="1335" height="1" fill="#c6c6c6"/><rect x="0" y="642" width="32" height="1" fill="#2a2a2a"/><rect x="33" y="659" width="1335" height="1" fill="#c6c6c6"/><rect x="0" y="659" width="32" height="1" fill="#2a2a2a"/><rect x="33" y="676" width="1335" height="1" fill="#c6c6c6"/><rect x="0" y="676" width="32" height="1" fill="#2a2a2a"/><rect x="33" y="693" width="1335" height="1" fill="#c6c6c6"/><rect x="0" y="693" width="32" height="1" fill="#2a2a2a"/><rect x="33" y="710" width="1335" height="1" fill="#c6c6c6"/><rect x="0" y="710" width="32" height="1" fill="#2a2a2a"/><rect x="33" y="727" width="1335" height="1" fill="#c6c6c6"/><rect x="0" y="727" width="32" height="1" fill="#2a2a2a"/><rect x="33" y="744" width="1335" height="1" fill="#c6c6c6"/><rect x="0" y="744" width="32" height="1" fill="#2a2a2a"/><rect x="33" y="761" width="1335" height="1" fill="#c6c6c6"/><rect x="0" y="761" width="32" height="1" fill="#2a2a2a"/><rect x="33" y="778" width="1335" height="1" fill="#c6c6c6"/><rect x="0" y="778" width="32" height="1" fill="#2a2a2a"/><rect x="33" y="795" width="1335" height="1" fill="#c6c6c6"/><rect x="0" y="795" width="32" height="1" fill="#2a2a2a"/><rect x="33" y="812" width="1335" height="1" fill="#c6c6c6"/><rect x="0" y="812" width="32" height="1" fill="#2a2a2a"/><rect x="133" y="201" width="1" height="607" fill="#c6c6c6"/><rect x="133" y="184" width="1" height="16" fill="#2a2a2a"/><rect x="314" y="201" width="1" height="607" fill="#c6c6c6"/><rect x="314" y="184" width="1" height="16" fill="#2a2a2a"/><rect x="396" y="201" width="1" height="607" fill="#c6c6c6"/><rect x="396" y="184" width="1" height="16" fill="#2a2a2a"/><rect x="490" y="201" width="1" height="607" fill="#c6c6c6"/><rect x="490" y="184" width="1" height="16" fill="#2a2a2a"/><rect x="572" y="201" width="1" height="607" fill="#c6c6c6"/><rect x="572" y="184" width="1" height="16" fill="#2a2a2a"/><rect x="683" y="201" width="1" height="607" fill="#c6c6c6"/><rect x="683" y="184" width="1" height="16" fill="#2a2a2a"/><rect x="782" y="201" width="1" height="607" fill="#c6c6c6"/><rect x="782" y="184" width="1" height="16" fill="#2a2a2a"/><rect x="864" y="201" width="1" height="607" fill="#c6c6c6"/><rect x="864" y="184" width="1" height="16" fill="#2a2a2a"/><rect x="951" y="201" width="1" height="607" fill="#c6c6c6"/><rect x="951" y="184" width="1" height="16" fill="#2a2a2a"/><rect x="1085" y="201" width="1" height="607" fill="#c6c6c6"/><rect x="1085" y="184" width="1" height="16" fill="#2a2a2a"/><rect x="1167" y="201" width="1" height="607" fill="#c6c6c6"/><rect x="1167" y="184" width="1" height="16" fill="#2a2a2a"/><rect x="1249" y="201" width="1" height="607" fill="#c6c6c6"/><rect x="1249" y="184" width="1" height="16" fill="#2a2a2a"/><rect x="1331" y="201" width="1" height="607" fill="#c6c6c6"/><rect x="1331" y="184" width="1" height="16" fill="#2a2a2a"/><rect x="0" y="200" width="1368" height="1" fill="#2a2a2a"/><rect x="32" y="184" width="1" height="624" fill="#2a2a2a"/><rect x="683" y="184" width="100" height="17" fill="#1f9ede"/><rect x="0" y="251" width="33" height="18" fill="#1f9ede"/></svg>
</div>
<div class="ch" style="left:33.8px;width:101px;color:#333">A</div>
<div class="ch" style="left:133.8px;width:182px;color:#333">B</div>
<div class="ch" style="left:314.8px;width:83px;color:#333">C</div>
<div class="ch" style="left:396.8px;width:95px;color:#333">D</div>
<div class="ch" style="left:490.8px;width:83px;color:#333">E</div>
<div class="ch" style="left:572.8px;width:112px;color:#333">F</div>
<div class="ch" style="left:683.8px;width:100px;color:#fff;font-weight:bold">G</div>
<div class="ch" style="left:782.8px;width:83px;color:#333">H</div>
<div class="ch" style="left:864.8px;width:88px;color:#333">I</div>
<div class="ch" style="left:951.8px;width:135px;color:#333">J</div>
<div class="ch" style="left:1085.8px;width:83px;color:#333">K</div>
<div class="ch" style="left:1167.8px;width:83px;color:#333">L</div>
<div class="ch" style="left:1249.8px;width:83px;color:#333">M</div>
<div class="rh" style="top:201px;height:17px;overflow:hidden;">1</div>
<div class="rh" style="top:218px;height:17px;overflow:hidden;">2</div>
<div class="rh" style="top:235px;height:17px;overflow:hidden;">3</div>
<div class="rh" style="top:252px;height:17px;overflow:hidden;color:#fff;font-weight:bold;">4</div>
<div class="rh" style="top:269px;height:17px;overflow:hidden;">5</div>
<div class="rh" style="top:286px;height:17px;overflow:hidden;">6</div>
<div class="rh" style="top:303px;height:17px;overflow:hidden;">7</div>
<div class="rh" style="top:320px;height:17px;overflow:hidden;">8</div>
<div class="rh" style="top:337px;height:17px;overflow:hidden;">9</div>
<div class="rh" style="top:354px;height:17px;overflow:hidden;">10</div>
<div class="rh" style="top:371px;height:17px;overflow:hidden;">11</div>
<div class="rh" style="top:388px;height:17px;overflow:hidden;">12</div>
<div class="rh" style="top:405px;height:17px;overflow:hidden;">13</div>
<div class="rh" style="top:422px;height:17px;overflow:hidden;">14</div>
<div class="rh" style="top:439px;height:17px;overflow:hidden;">15</div>
<div class="rh" style="top:456px;height:17px;overflow:hidden;">16</div>
<div class="rh" style="top:473px;height:17px;overflow:hidden;">17</div>
<div class="rh" style="top:490px;height:17px;overflow:hidden;">18</div>
<div class="rh" style="top:507px;height:17px;overflow:hidden;">19</div>
<div class="rh" style="top:524px;height:17px;overflow:hidden;">20</div>
<div class="rh" style="top:541px;height:17px;overflow:hidden;">21</div>
<div class="rh" style="top:558px;height:17px;overflow:hidden;">22</div>
<div class="rh" style="top:575px;height:17px;overflow:hidden;">23</div>
<div class="rh" style="top:592px;height:17px;overflow:hidden;">24</div>
<div class="rh" style="top:609px;height:17px;overflow:hidden;">25</div>
<div class="rh" style="top:626px;height:17px;overflow:hidden;">26</div>
<div class="rh" style="top:643px;height:17px;overflow:hidden;">27</div>
<div class="rh" style="top:660px;height:17px;overflow:hidden;">28</div>
<div class="rh" style="top:677px;height:17px;overflow:hidden;">29</div>
<div class="rh" style="top:694px;height:17px;overflow:hidden;">30</div>
<div class="rh" style="top:711px;height:17px;overflow:hidden;">31</div>
<div class="rh" style="top:728px;height:17px;overflow:hidden;">32</div>
<div class="rh" style="top:745px;height:17px;overflow:hidden;">33</div>
<div class="rh" style="top:762px;height:17px;overflow:hidden;">34</div>
<div class="rh" style="top:779px;height:17px;overflow:hidden;">35</div>
<div class="rh" style="top:796px;height:12px;overflow:hidden;">36</div>
<div class="c b" style="left:34px;top:201px;">Date</div>
<div class="c b" style="left:135px;top:201px;">Product</div>
<div class="c b" style="left:316px;top:201px;">Region</div>
<div class="c b" style="left:398px;top:201px;">Sales Rep</div>
<div class="c b" style="left:492px;top:201px;">Units Sold</div>
<div class="c b" style="left:574px;top:201px;">Unit Price (USD)</div>
<div class="c b" style="left:685px;top:201px;">Total Revenue</div>
<div class="c r" style="left:34px;width:98.7px;top:218px;">01/03/25</div>
<div class="c" style="left:135px;top:218px;">Wireless Mouse</div>
<div class="c" style="left:316px;top:218px;">North</div>
<div class="c" style="left:398px;top:218px;">Alice Carter</div>
<div class="c r" style="left:491px;width:80.7px;top:218px;">120</div>
<div class="c r" style="left:573px;width:109.7px;top:218px;">25</div>
<div class="c r" style="left:684px;width:97.7px;top:218px;">3000</div>
<div class="c r" style="left:34px;width:98.7px;top:235px;">02/03/25</div>
<div class="c" style="left:135px;top:235px;">USB-C Hub</div>
<div class="c" style="left:316px;top:235px;">West</div>
<div class="c" style="left:398px;top:235px;">Ben Tran</div>
<div class="c r" style="left:491px;width:80.7px;top:235px;">85</div>
<div class="c r" style="left:573px;width:109.7px;top:235px;">45</div>
<div class="c r" style="left:684px;width:97.7px;top:235px;">3825</div>
<div class="c r" style="left:34px;width:98.7px;top:252px;">03/03/25</div>
<div class="c" style="left:135px;top:252px;">Mechanical Keyboard</div>
<div class="c" style="left:316px;top:252px;">East</div>
<div class="c" style="left:398px;top:252px;">Ben Tran</div>
<div class="c r" style="left:491px;width:80.7px;top:252px;">60</div>
<div class="c r" style="left:573px;width:109.7px;top:252px;">80</div>
<div class="c r" style="left:684px;width:97.7px;top:252px;">4800</div>
<div class="c r" style="left:34px;width:98.7px;top:269px;">04/03/25</div>
<div class="c" style="left:135px;top:269px;">Monitor Stand</div>
<div class="c" style="left:316px;top:269px;">South</div>
<div class="c" style="left:398px;top:269px;">Alice Carter</div>
<div class="c r" style="left:491px;width:80.7px;top:269px;">45</div>
<div class="c r" style="left:573px;width:109.7px;top:269px;">30</div>
<div class="c r" style="left:684px;width:97.7px;top:269px;">1350</div>
<div class="c r" style="left:34px;width:98.7px;top:286px;">05/03/25</div>
<div class="c" style="left:135px;top:286px;">Laptop Sleeve</div>
<div class="c" style="left:316px;top:286px;">North</div>
<div class="c" style="left:398px;top:286px;">Eli Jones</div>
<div class="c r" style="left:491px;width:80.7px;top:286px;">150</div>
<div class="c r" style="left:573px;width:109.7px;top:286px;">18</div>
<div class="c r" style="left:684px;width:97.7px;top:286px;">2700</div>
<div class="c r" style="left:34px;width:98.7px;top:303px;">06/03/25</div>
<div class="c" style="left:135px;top:303px;">Noise-Canceling Headphones</div>
<div class="c" style="left:316px;top:303px;">West</div>
<div class="c" style="left:398px;top:303px;">Ian Miller</div>
<div class="c r" style="left:491px;width:80.7px;top:303px;">40</div>
<div class="c r" style="left:573px;width:109.7px;top:303px;">120</div>
<div class="c r" style="left:684px;width:97.7px;top:303px;">4800</div>
<div class="c r" style="left:34px;width:98.7px;top:320px;">07/03/25</div>
<div class="c" style="left:135px;top:320px;">Wireless Mouse</div>
<div class="c" style="left:316px;top:320px;">East</div>
<div class="c" style="left:398px;top:320px;">Alice Carter</div>
<div class="c r" style="left:491px;width:80.7px;top:320px;">90</div>
<div class="c r" style="left:573px;width:109.7px;top:320px;">25</div>
<div class="c r" style="left:684px;width:97.7px;top:320px;">2250</div>
<div class="c r" style="left:34px;width:98.7px;top:337px;">08/03/25</div>
<div class="c" style="left:135px;top:337px;">USB-C Hub</div>
<div class="c" style="left:316px;top:337px;">South</div>
<div class="c" style="left:398px;top:337px;">Ben Tran</div>
<div class="c r" style="left:491px;width:80.7px;top:337px;">70</div>
<div class="c r" style="left:573px;width:109.7px;top:337px;">45</div>
<div class="c r" style="left:684px;width:97.7px;top:337px;">3150</div>
<div class="c r" style="left:34px;width:98.7px;top:354px;">09/03/25</div>
<div class="c" style="left:135px;top:354px;">Monitor Stand</div>
<div class="c" style="left:316px;top:354px;">North</div>
<div class="c" style="left:398px;top:354px;">Ian Miller</div>
<div class="c r" style="left:491px;width:80.7px;top:354px;">55</div>
<div class="c r" style="left:573px;width:109.7px;top:354px;">30</div>
<div class="c r" style="left:684px;width:97.7px;top:354px;">1650</div>
<div class="c r" style="left:34px;width:98.7px;top:371px;">10/03/25</div>
<div class="c" style="left:135px;top:371px;">Laptop Sleeve</div>
<div class="c" style="left:316px;top:371px;">West</div>
<div class="c" style="left:398px;top:371px;">Ben Tran</div>
<div class="c r" style="left:491px;width:80.7px;top:371px;">130</div>
<div class="c r" style="left:573px;width:109.7px;top:371px;">5</div>
<div class="c r" style="left:684px;width:97.7px;top:371px;">650</div>
<svg class="a" style="left:135.0px;top:247.4px" width="41.4" height="6" viewBox="0 0 41.4 6"><path d="M0 2.70q1.56 -3.40 3.11 0q1.56 3.40 3.11 0q1.56 -3.40 3.11 0q1.56 3.40 3.11 0q1.56 -3.40 3.11 0q1.56 3.40 3.11 0q1.56 -3.40 3.11 0q1.56 3.40 3.11 0q1.56 -3.40 3.11 0q1.56 3.40 3.11 0q1.56 -3.40 3.11 0q1.56 3.40 3.11 0q1.56 -3.40 3.11 0" fill="none" stroke="#e8262d" stroke-width="1.25"/></svg>
<svg class="a" style="left:135.0px;top:349.4px" width="41.4" height="6" viewBox="0 0 41.4 6"><path d="M0 2.70q1.56 -3.40 3.11 0q1.56 3.40 3.11 0q1.56 -3.40 3.11 0q1.56 3.40 3.11 0q1.56 -3.40 3.11 0q1.56 3.40 3.11 0q1.56 -3.40 3.11 0q1.56 3.40 3.11 0q1.56 -3.40 3.11 0q1.56 3.40 3.11 0q1.56 -3.40 3.11 0q1.56 3.40 3.11 0q1.56 -3.40 3.11 0" fill="none" stroke="#e8262d" stroke-width="1.25"/></svg>
<svg class="a" style="left:135.0px;top:315.4px" width="96.4" height="6" viewBox="0 0 96.4 6"><path d="M0 2.70q1.59 -3.40 3.18 0q1.59 3.40 3.18 0q1.59 -3.40 3.18 0q1.59 3.40 3.18 0q1.59 -3.40 3.18 0q1.59 3.40 3.18 0q1.59 -3.40 3.18 0q1.59 3.40 3.18 0q1.59 -3.40 3.18 0q1.59 3.40 3.18 0q1.59 -3.40 3.18 0q1.59 3.40 3.18 0q1.59 -3.40 3.18 0q1.59 3.40 3.18 0q1.59 -3.40 3.18 0q1.59 3.40 3.18 0q1.59 -3.40 3.18 0q1.59 3.40 3.18 0q1.59 -3.40 3.18 0q1.59 3.40 3.18 0q1.59 -3.40 3.18 0q1.59 3.40 3.18 0q1.59 -3.40 3.18 0q1.59 3.40 3.18 0q1.59 -3.40 3.18 0q1.59 3.40 3.18 0q1.59 -3.40 3.18 0q1.59 3.40 3.18 0q1.59 -3.40 3.18 0q1.59 3.40 3.18 0" fill="none" stroke="#e8262d" stroke-width="1.25"/></svg>
<svg class="a" style="left:642.6px;top:214.20000000000002px" width="28.4" height="6" viewBox="0 0 28.4 6"><path d="M0 2.70q1.52 -3.40 3.05 0q1.52 3.40 3.05 0q1.52 -3.40 3.05 0q1.52 3.40 3.05 0q1.52 -3.40 3.05 0q1.52 3.40 3.05 0q1.52 -3.40 3.05 0q1.52 3.40 3.05 0q1.52 -3.40 3.05 0" fill="none" stroke="#e8262d" stroke-width="1.25"/></svg>
<div class="c b" style="left:866px;top:252px;">Sales Rep</div>
<div class="c b" style="left:953px;top:252px;">Sum - Total Revenue</div>
<div class="c" style="left:866px;top:269px;">Alice Carter</div>
<div class="c r" style="left:952px;width:132.7px;top:269px;">6600</div>
<div class="c" style="left:866px;top:286px;">Ben Tran</div>
<div class="c r" style="left:952px;width:132.7px;top:286px;">11775</div>
<div class="c" style="left:866px;top:303px;">Eli Jones</div>
<div class="c r" style="left:952px;width:132.7px;top:303px;">2700</div>
<div class="c" style="left:866px;top:320px;">Ian Miller</div>
<div class="c r" style="left:952px;width:132.7px;top:320px;">6450</div>
<div class="c b" style="left:866px;top:337px;">Total Result</div>
<div class="c r b" style="left:952px;width:132.7px;top:337px;">27525</div>
<svg class="a" style="left:860px;top:248px" width="230" height="110" viewBox="860 248 230 110"><path d="M863.3 250H1087V354.5H863.3zM865.8 252.5V352.2H1084V252.5z" fill="#000" fill-rule="evenodd"/><rect x="950.8" y="251" width="1.4" height="102" fill="#000"/><rect x="864" y="267.5" width="221" height="1.4" fill="#000"/><rect x="864" y="335.6" width="221" height="1.4" fill="#000"/></svg>
<svg class="a" style="left:680px;top:248px" width="108" height="26" viewBox="680 248 108 26"><path d="M682.2 250H783V268.8H682.2zM685 252.9V265.8H780.2V252.9z" fill="#2795d6" fill-rule="evenodd"/><rect x="780" y="266.2" width="4.8" height="5.1" fill="#2795d6"/></svg>
<svg class="a" style="left:418px;top:428px" width="582" height="339" viewBox="418 428 582 339" font-family="Liberation Sans, sans-serif" font-size="12.6"><rect x="418" y="428" width="582" height="339" fill="#fff"/><path d="M453.5 705.7H905.5" stroke="#b3b3b3" stroke-width="1.4" fill="none"/><text x="450.5" y="710.0" text-anchor="end" fill="#111">0</text><path d="M453.5 672.7H905.5" stroke="#b3b3b3" stroke-width="1.4" fill="none"/><text x="450.5" y="677.0" text-anchor="end" fill="#111">20</text><path d="M453.5 639.7H905.5" stroke="#b3b3b3" stroke-width="1.4" fill="none"/><text x="450.5" y="644.0" text-anchor="end" fill="#111">40</text><path d="M453.5 606.7H905.5" stroke="#b3b3b3" stroke-width="1.4" fill="none"/><text x="450.5" y="611.0" text-anchor="end" fill="#111">60</text><path d="M453.5 574.7H905.5" stroke="#b3b3b3" stroke-width="1.4" fill="none"/><text x="450.5" y="579.0" text-anchor="end" fill="#111">80</text><path d="M453.5 541.7H905.5" stroke="#b3b3b3" stroke-width="1.4" fill="none"/><text x="450.5" y="546.0" text-anchor="end" fill="#111">100</text><path d="M453.5 508.7H905.5" stroke="#b3b3b3" stroke-width="1.4" fill="none"/><text x="450.5" y="513.0" text-anchor="end" fill="#111">120</text><path d="M453.5 475.7H905.5" stroke="#b3b3b3" stroke-width="1.4" fill="none"/><text x="450.5" y="480.0" text-anchor="end" fill="#111">140</text><path d="M453.5 442.7H905.5" stroke="#b3b3b3" stroke-width="1.4" fill="none"/><text x="450.5" y="447.0" text-anchor="end" fill="#111">160</text><path d="M459.3 442.5V710.5" stroke="#b3b3b3" stroke-width="1.4" fill="none"/><path d="M905.3 442.5V710.5" stroke="#b3b3b3" stroke-width="1.4" fill="none"/><rect x="469.85" y="508.25" width="22.30" height="197.25" fill="#004586"/><text transform="translate(480.5 720.5) rotate(-45)" text-anchor="end" y="4" fill="#111">01/03/25</text><rect x="514.45" y="565.78" width="22.30" height="139.72" fill="#004586"/><path d="M504.5 705.5V710.5" stroke="#b3b3b3" stroke-width="1.300" fill="none"/><text transform="translate(525.1 720.5) rotate(-45)" text-anchor="end" y="4" fill="#111">02/03/25</text><rect x="559.05" y="606.88" width="22.30" height="98.62" fill="#004586"/><path d="M548.5 705.5V710.5" stroke="#b3b3b3" stroke-width="1.300" fill="none"/><text transform="translate(569.7 720.5) rotate(-45)" text-anchor="end" y="4" fill="#111">03/03/25</text><rect x="603.65" y="631.53" width="22.30" height="73.97" fill="#004586"/><path d="M593.5 705.5V710.5" stroke="#b3b3b3" stroke-width="1.300" fill="none"/><text transform="translate(614.3 720.5) rotate(-45)" text-anchor="end" y="4" fill="#111">04/03/25</text><rect x="648.25" y="458.94" width="22.30" height="246.56" fill="#004586"/><path d="M637.5 705.5V710.5" stroke="#b3b3b3" stroke-width="1.300" fill="none"/><text transform="translate(658.9 720.5) rotate(-45)" text-anchor="end" y="4" fill="#111">05/03/25</text><rect x="692.85" y="639.75" width="22.30" height="65.75" fill="#004586"/><path d="M682.5 705.5V710.5" stroke="#b3b3b3" stroke-width="1.300" fill="none"/><text transform="translate(703.5 720.5) rotate(-45)" text-anchor="end" y="4" fill="#111">06/03/25</text><rect x="737.45" y="557.56" width="22.30" height="147.94" fill="#004586"/><path d="M727.5 705.5V710.5" stroke="#b3b3b3" stroke-width="1.300" fill="none"/><text transform="translate(748.1 720.5) rotate(-45)" text-anchor="end" y="4" fill="#111">07/03/25</text><rect x="782.05" y="590.44" width="22.30" height="115.06" fill="#004586"/><path d="M771.5 705.5V710.5" stroke="#b3b3b3" stroke-width="1.300" fill="none"/><text transform="translate(792.7 720.5) rotate(-45)" text-anchor="end" y="4" fill="#111">08/03/25</text><rect x="826.65" y="615.09" width="22.30" height="90.41" fill="#004586"/><path d="M816.5 705.5V710.5" stroke="#b3b3b3" stroke-width="1.300" fill="none"/><text transform="translate(837.3 720.5) rotate(-45)" text-anchor="end" y="4" fill="#111">09/03/25</text><rect x="871.25" y="491.81" width="22.30" height="213.69" fill="#004586"/><path d="M860.5 705.5V710.5" stroke="#b3b3b3" stroke-width="1.300" fill="none"/><text transform="translate(881.9 720.5) rotate(-45)" text-anchor="end" y="4" fill="#111">10/03/25</text><rect x="920.5" y="593" width="8" height="8.5" fill="#004586"/><text x="932" y="601.6" fill="#111">Units Sold</text></svg>
<div class="a" style="left:1368px;top:184px;width:12px;height:624px;background:#fdfdfd"></div>
<div class="a" style="left:1368px;top:184px;width:12px;height:5px;background:#b5b5b5"></div>
<div class="a" style="left:1371px;top:186px;width:6px;height:1px;background:#111"></div>
<div class="a" style="left:1371px;top:192px;width:6px;height:294px;background:#adadad;border-radius:3px"></div>
<div class="a" style="left:1380px;top:456px;width:7px;height:73px;background:#2e2e2e"></div>
<svg class="a" style="left:1381px;top:488px" width="6" height="10"><path d="M0.300 0.800L5.500 4.700 0.300 8.600z" fill="#f2f2f2"/></svg>
<svg class="ic" style="left:1399px;top:195px" width="24" height="24" viewBox="0 0 24 24"><rect x="2.500" y="2.500" width="19" height="19" fill="#fff" stroke="#3a3a38" stroke-width="1.200"/><rect x="2" y="2" width="20" height="3.500" fill="#5e5e5c"/><path d="M6 11h12M6 15.500h12" stroke="#3a3a38" stroke-width="0.900"/><circle cx="14" cy="11" r="1.400" fill="#1e8bcd"/><circle cx="10.500" cy="15.500" r="1.400" fill="#1e8bcd"/></svg>
<svg class="ic" style="left:1399px;top:240px" width="24" height="24" viewBox="0 0 24 24"><text x="1.300" y="17.600" font-family="Liberation Sans, sans-serif" font-size="21.500" fill="#3a3a38" stroke="#f7f7f7" stroke-width="0.150" textLength="13.500" lengthAdjust="spacingAndGlyphs">A</text><path d="M22.500 8c1.200 1.500-2.500 6-6.300 10.600l-2.400-1.800c3.200-4.300 7.200-9.300 8.700-8.800z" fill="#fff" stroke="#3a3a38" stroke-width="0.900" stroke-linejoin="round"/><path d="M16 18.500c-0.300 2.200-3.800 4.200-9 3.800 2-1.300 3.500-3.800 6.700-5.500z" fill="#83beec" stroke="#1e8bcd" stroke-width="0.900" stroke-linejoin="round"/></svg>
<svg class="ic" style="left:1399px;top:285px" width="24" height="24" viewBox="0 0 24 24"><path d="M1.500 19.500v-15.500h5.500l2 2.500h9.500v3.500" fill="#fdf0d0" stroke="#ed8733" stroke-linejoin="round"/><path d="M1.500 19.500l2.500-9.500h18.500l-1.500 4" fill="#f8db8f" stroke="#ed8733" stroke-linejoin="round"/><path d="M1.500 19.500h8" stroke="#ed8733"/><rect x="9.500" y="11.500" width="12" height="10" fill="#fff" stroke="#3a3a38"/><circle cx="12.500" cy="14.200" r="1.100" fill="#ed8733"/><path d="M10 21l4-4 2.500 2 2-2 2.500 2.500v1.500z" fill="#83beec" stroke="#1e8bcd" stroke-width="0.800"/></svg>
<svg class="ic" style="left:1399px;top:330px" width="24" height="24" viewBox="0 0 24 24"><circle cx="12" cy="12" r="9.500" fill="#fff" stroke="#3a3a38" stroke-width="1.100"/><path d="M17 7l-2.500 7.500-7.500 2.500 2.500-7.500z" fill="#1e8bcd"/><circle cx="12" cy="12" r="1.300" fill="#fff"/></svg>
<svg class="ic" style="left:1399px;top:375px" width="24" height="24" viewBox="0 0 24 24"><text x="4.500" y="20" font-family="Liberation Serif, serif" font-size="24" font-style="italic" fill="#1e8bcd">f</text><text x="12.500" y="20" font-family="Liberation Serif, serif" font-size="20" font-style="italic" fill="#1e8bcd">x</text></svg>
<div class="a" style="left:0;top:808px;width:1380px;height:36px;background:#f5f5f5"></div>
<div class="a" style="left:0;top:808px;width:1363px;height:12px;background:#fdfdfd"></div>
<div class="a" style="left:2px;top:811px;width:627px;height:6px;background:#adadad;border-radius:3px"></div>
<div class="a" style="left:1363px;top:808px;width:5px;height:12px;background:#bdbdbd"></div>
<div class="a" style="left:1365px;top:811px;width:1px;height:6px;background:#222"></div>
<svg class="ic" style="left:5px;top:819px" width="24" height="24" viewBox="0 0 24 24"><rect x="4.800" y="4.200" width="2.900" height="14.500" rx="1.400" fill="#fbfbfb" stroke="#bcbcbc" stroke-width="0.900"/><path d="M18.300 5.800l-8 5.400 8 5.600" fill="none" stroke="#bcbcbc" stroke-width="3.2" stroke-linejoin="round" stroke-linecap="round"/><path d="M18.300 5.800l-8 5.400 8 5.600" fill="none" stroke="#fbfbfb" stroke-width="1.300" stroke-linejoin="round" stroke-linecap="round"/><circle cx="18.800" cy="11.300" r="1.200" fill="#fbfbfb" stroke="#bcbcbc" stroke-width="0.800"/></svg>
<svg class="ic" style="left:28px;top:819px" width="24" height="24" viewBox="0 0 24 24"><rect x="5" y="7.200" width="2.600" height="8.700" fill="#fbfbfb" stroke="#bcbcbc" stroke-width="0.900"/><path d="M13.200 7.200v8.700l-5-4.350zM18.700 7.200v8.700l-5-4.350z" fill="#fbfbfb" stroke="#bcbcbc" stroke-width="0.900" stroke-linejoin="round"/></svg>
<svg class="ic" style="left:51px;top:819px" width="24" height="24" viewBox="0 0 24 24"><rect x="16.300" y="7.200" width="2.600" height="8.700" fill="#fbfbfb" stroke="#bcbcbc" stroke-width="0.900"/><path d="M5.200 7.200v8.700l5-4.350zM10.900 7.200v8.700l5-4.350z" fill="#fbfbfb" stroke="#bcbcbc" stroke-width="0.900" stroke-linejoin="round"/></svg>
<svg class="ic" style="left:74px;top:819px" width="24" height="24" viewBox="0 0 24 24"><rect x="16" y="4.200" width="2.900" height="14.500" rx="1.400" fill="#fbfbfb" stroke="#bcbcbc" stroke-width="0.900"/><path d="M5.400 5.800l8 5.400-8 5.600" fill="none" stroke="#bcbcbc" stroke-width="3.2" stroke-linejoin="round" stroke-linecap="round"/><path d="M5.400 5.800l8 5.400-8 5.600" fill="none" stroke="#fbfbfb" stroke-width="1.300" stroke-linejoin="round" stroke-linecap="round"/><circle cx="4.900" cy="11.300" r="1.200" fill="#fbfbfb" stroke="#bcbcbc" stroke-width="0.800"/></svg>
<svg class="ic" style="left:104px;top:819px" width="24" height="24" viewBox="0 0 24 24"><path d="M4.500 4.500h8l3 3v11.500h-11z" fill="#fff" stroke="#c9c9c9" stroke-linejoin="round"/><circle cx="15.500" cy="12.500" r="3.700" fill="#1d4f91"/><path d="M15.500 10.300v4.400M13.300 12.500h4.400" stroke="#fff" stroke-width="1.100"/></svg>
<div class="a" style="left:133px;top:820px;width:65px;height:23px;background:#fff"></div>
<div class="a" style="left:133px;top:840px;width:65px;height:3px;background:#222"></div>
<div class="t" style="left:133px;width:65px;text-align:center;top:822px;font-size:12px;font-weight:bold;color:#111;line-height:18px">Sheet1</div>
<div class="t ui" style="left:211px;top:822px;font-size:12px;line-height:18px">Pivot Table_Sheet1_1</div>
<div class="a" style="left:342px;top:824px;width:1px;height:12px;background:#9a9a9a"></div>
<div class="a" style="left:0;top:843px;width:1440px;height:24px;background:#f4f4f4;border-top:1px solid #cfcfcf"></div>
<div class="a" style="left:30px;top:847px;width:1px;height:20px;background:#d9d9d9"></div>
<div class="a" style="left:212px;top:847px;width:1px;height:20px;background:#d9d9d9"></div>
<div class="a" style="left:394px;top:847px;width:1px;height:20px;background:#d9d9d9"></div>
<div class="a" style="left:559px;top:847px;width:1px;height:20px;background:#d9d9d9"></div>
<div class="a" style="left:780px;top:847px;width:1px;height:20px;background:#d9d9d9"></div>
<div class="a" style="left:895px;top:847px;width:1px;height:20px;background:#d9d9d9"></div>
<div class="a" style="left:922px;top:847px;width:1px;height:20px;background:#d9d9d9"></div>
<div class="a" style="left:1249px;top:847px;width:1px;height:20px;background:#d9d9d9"></div>
<div class="a" style="left:1390px;top:847px;width:1px;height:20px;background:#d9d9d9"></div>
<svg class="ic" style="left:5px;top:843px" width="24" height="24" viewBox="0 0 24 24"><path d="M4.500 4.500h13l2 2v13h-15z" fill="#fff" stroke="#d9383f" stroke-width="1.200" stroke-linejoin="round"/><rect x="7.500" y="4.500" width="8" height="5" fill="none" stroke="#d9383f" stroke-width="1.200"/><rect x="7" y="13.500" width="10" height="6" fill="none" stroke="#d9383f" stroke-width="1.200"/><rect x="9" y="15" width="2" height="4" fill="#d9383f"/></svg>
<div class="t ui" style="left:39px;top:849px;font-size:12px;line-height:18px">Sheet 1 of 2</div>
<div class="t ui" style="left:403px;top:849px;font-size:12px;line-height:18px">Default</div>
<div class="t ui" style="left:622px;top:849px;font-size:12px;line-height:18px">English (Australia)</div>
<div class="t ui" style="left:1016px;top:849px;font-size:12px;line-height:18px">Average: 4800; Sum: 4800</div>
<div class="t ui" style="left:1399px;top:849px;font-size:12px;line-height:18px">100%</div>
<svg class="ic" style="left:856px;top:844px" width="24" height="24" viewBox="0 0 24 24"><rect x="2.500" y="7.500" width="16" height="9" fill="#fff" stroke="#1e8bcd" stroke-width="1.100"/><path d="M25.500 5.500v13M23 5.500h5M23 18.500h5" stroke="#222" stroke-width="1" fill="none"/></svg>
<div class="a" style="left:1258px;top:856px;width:10px;height:2px;background:#222"></div>
<div class="a" style="left:1273px;top:856px;width:97px;height:1px;background:#555"></div>
<div class="a" style="left:1319px;top:851px;width:4px;height:11px;background:#f4f4f4;border:1px solid #333"></div>
<div class="a" style="left:1375px;top:856px;width:10px;height:2px;background:#222"></div>
<div class="a" style="left:1379px;top:852px;width:2px;height:10px;background:#222"></div>
</div></body></html>
